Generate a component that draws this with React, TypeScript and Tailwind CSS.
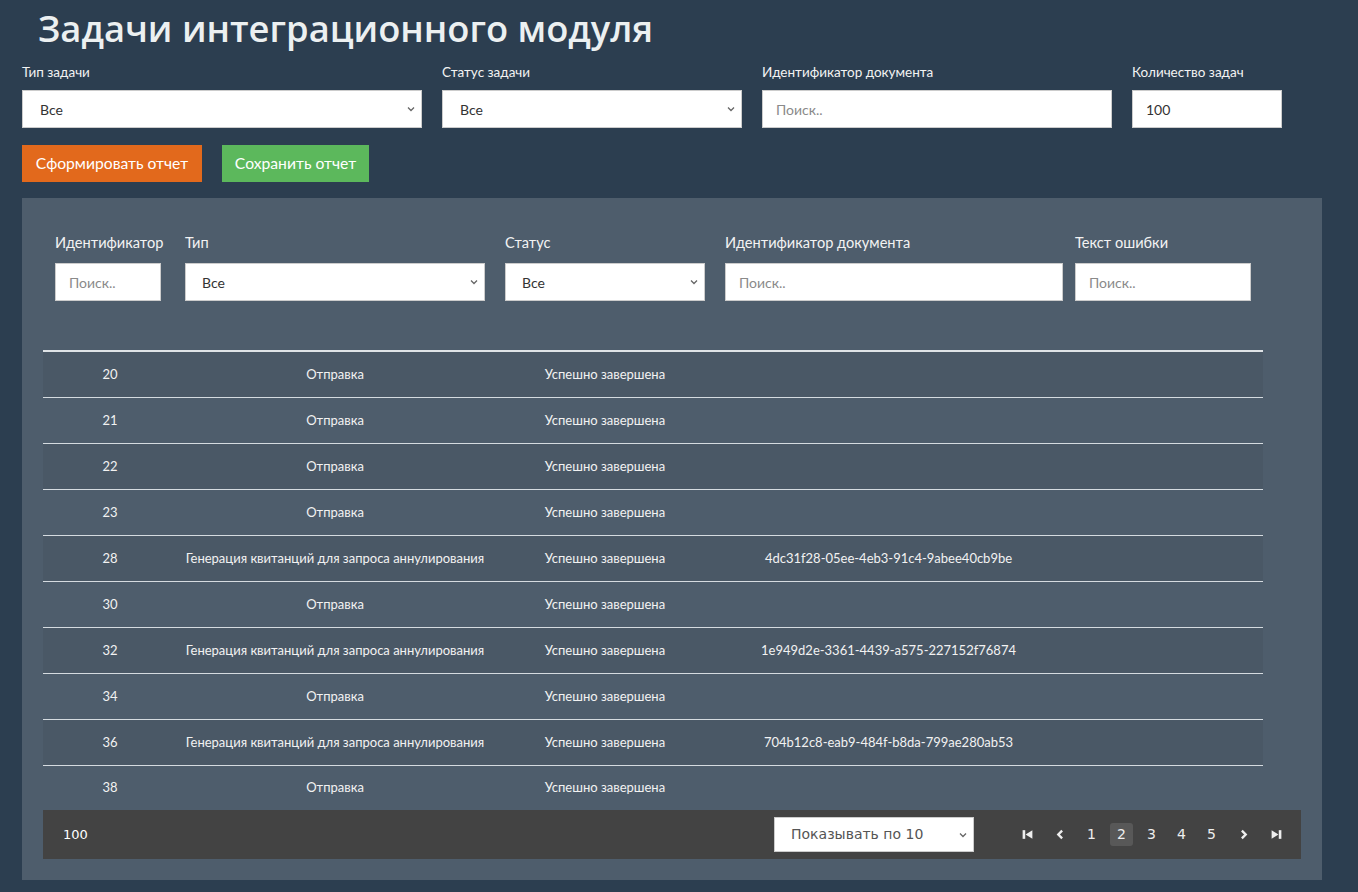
import React from "react";

type Row = { id: number; type: string; status: string; doc: string };

const SEND = "Отправка";
const GEN = "Генерация квитанций для запроса аннулирования";
const OK = "Успешно завершена";

const rows: Row[] = [
  { id: 20, type: SEND, status: OK, doc: "" },
  { id: 21, type: SEND, status: OK, doc: "" },
  { id: 22, type: SEND, status: OK, doc: "" },
  { id: 23, type: SEND, status: OK, doc: "" },
  { id: 28, type: GEN, status: OK, doc: "4dc31f28-05ee-4eb3-91c4-9abee40cb9be" },
  { id: 30, type: SEND, status: OK, doc: "" },
  { id: 32, type: GEN, status: OK, doc: "1e949d2e-3361-4439-a575-227152f76874" },
  { id: 34, type: SEND, status: OK, doc: "" },
  { id: 36, type: GEN, status: OK, doc: "704b12c8-eab9-484f-b8da-799ae280ab53" },
  { id: 38, type: SEND, status: OK, doc: "" },
];

const Chevron = () => (
  <svg width="10" height="10" viewBox="0 0 10 10" className="pointer-events-none absolute right-[6px] top-1/2 -translate-y-1/2">
    <path d="M2 3.5 L5 6.5 L8 3.5" fill="none" stroke="#666" strokeWidth="1.3" />
  </svg>
);

const Select = ({ w, pl, value }: { w: string; pl: string; value: string }) => (
  <div className={`relative h-[38px] ${w}`}>
    <select
      defaultValue={value}
      className={`h-full w-full appearance-none border border-[#ccc] bg-white ${pl} font-['Lato',sans-serif] text-[14px] text-[#333] outline-none`}
    >
      <option>{value}</option>
    </select>
    <Chevron />
  </div>
);

const Input = ({ w, placeholder, value }: { w: string; placeholder?: string; value?: string }) => (
  <input
    defaultValue={value}
    placeholder={placeholder}
    className={`h-[38px] ${w} border border-[#ccc] bg-white px-[13px] font-['Lato',sans-serif] text-[14px] text-[#333] outline-none placeholder:text-[#8a8a8a]`}
  />
);

const Label = ({ children }: { children: React.ReactNode }) => (
  <div className="mb-[10px] whitespace-nowrap font-['Lato',sans-serif] text-[13.5px] leading-[16px] text-[#f3f3f3]">{children}</div>
);

const BigLabel = ({ children }: { children: React.ReactNode }) => (
  <div className="mb-[12px] whitespace-nowrap font-['Lato',sans-serif] text-[14.6px] leading-[17px] text-[#f3f3f3]">{children}</div>
);

const PagerIcon = ({ kind }: { kind: "first" | "prev" | "next" | "last" }) => (
  <svg width="13" height="13" viewBox="0 0 12 12">
    {kind === "first" && (
      <>
        <rect x="1.5" y="2" width="2.4" height="8" fill="#eee" />
        <path d="M10.5 2 L4.2 6 L10.5 10 Z" fill="#eee" />
      </>
    )}
    {kind === "last" && (
      <>
        <rect x="8.1" y="2" width="2.4" height="8" fill="#eee" />
        <path d="M1.5 2 L7.8 6 L1.5 10 Z" fill="#eee" />
      </>
    )}
    {kind === "prev" && <path d="M7.5 2.5 L4 6 L7.5 9.5" fill="none" stroke="#eee" strokeWidth="2.2" />}
    {kind === "next" && <path d="M4.5 2.5 L8 6 L4.5 9.5" fill="none" stroke="#eee" strokeWidth="2.2" />}
  </svg>
);

export default function App() {
  return (
    <div className="min-h-screen bg-[#2c3e50] px-[22px] pb-[12px]">
      <h1 className="pl-4 pt-[6px] font-['Open_Sans',sans-serif] text-[36.3px] font-semibold leading-[44px] text-[#ecf0f1]">
        Задачи интеграционного модуля
      </h1>

      <div className="mt-[14px] flex gap-[20px]">
        <div>
          <Label>Тип задачи</Label>
          <Select w="w-[400px]" pl="pl-[17px]" value="Все" />
        </div>
        <div>
          <Label>Статус задачи</Label>
          <Select w="w-[300px]" pl="pl-[17px]" value="Все" />
        </div>
        <div>
          <Label>Идентификатор документа</Label>
          <Input w="w-[350px]" placeholder="Поиск.." />
        </div>
        <div>
          <Label>Количество задач</Label>
          <Input w="w-[150px]" value="100" />
        </div>
      </div>

      <div className="mt-[17px] flex gap-[20px] font-['Lato',sans-serif] text-[15.7px] text-white">
        <button className="h-[37px] w-[180px] bg-[#e2691c]">Сформировать отчет</button>
        <button className="h-[37px] w-[147px] bg-[#5cb85c]">Сохранить отчет</button>
      </div>

      <div className="mt-[16px] w-[1300px] bg-[#4e5d6c] px-[21px] pb-[21px] pt-[36px]">
        <div className="flex pl-[12px]">
          <div className="w-[110px]">
            <BigLabel>Идентификатор</BigLabel>
            <Input w="w-[106px]" placeholder="Поиск.." />
          </div>
          <div className="ml-[20px]">
            <BigLabel>Тип</BigLabel>
            <Select w="w-[300px]" pl="pl-[16px]" value="Все" />
          </div>
          <div className="ml-[20px]">
            <BigLabel>Статус</BigLabel>
            <Select w="w-[200px]" pl="pl-[16px]" value="Все" />
          </div>
          <div className="ml-[20px]">
            <BigLabel>Идентификатор документа</BigLabel>
            <Input w="w-[338px]" placeholder="Поиск.." />
          </div>
          <div className="ml-[12px]">
            <BigLabel>Текст ошибки</BigLabel>
            <Input w="w-[176px]" placeholder="Поиск.." />
          </div>
        </div>

        <div className="mt-[49px] w-[1220px] border-t-2 border-[#dfe3e6]">
          {rows.map((r, i) => (
            <div
              key={r.id}
              className={`flex items-center text-[#f2f2f2] ${i % 2 === 0 ? "bg-[#4a5866]" : "bg-[#4e5d6c]"} ${
                i < rows.length - 1 ? "h-[46px] border-b border-[#d5dbe0]" : "h-[44px]"
              }`}
            >
              <div className="w-[134px] text-center font-['Lato',sans-serif] text-[13px]">{r.id}</div>
              <div className="w-[316px] text-center font-['Lato',sans-serif] text-[13px]">{r.type}</div>
              <div className="w-[224px] text-center font-['Lato',sans-serif] text-[13px]">{r.status}</div>
              <div className="w-[343px] text-center font-['Lato',sans-serif] text-[13px]">{r.doc}</div>
              <div className="flex-1" />
            </div>
          ))}
        </div>

        <div className="flex h-[49px] items-center bg-[#434343] pl-[20px] pr-[12px] font-['DejaVu_Sans',sans-serif] text-white">
          <div className="text-[13px]">100</div>
          <div className="flex-1" />
          <div className="relative h-[35px] w-[200px]">
            <select className="h-full w-full appearance-none border border-[#ccc] bg-white pl-[16px] font-['DejaVu_Sans',sans-serif] text-[14px] text-[#555] outline-none">
              <option>Показывать по 10</option>
            </select>
            <Chevron />
          </div>
          <div className="ml-[40px] flex items-center gap-[7px] text-[14px] text-[#eee]">
            <span className="flex h-[23px] w-[26px] items-center justify-center"><PagerIcon kind="first" /></span>
            <span className="flex h-[23px] w-[26px] items-center justify-center"><PagerIcon kind="prev" /></span>
            {[1, 2, 3, 4, 5].map((p) => (
              <span
                key={p}
                className={`flex h-[23px] w-[23px] items-center justify-center rounded-[3px] ${p === 2 ? "bg-[#585858]" : ""}`}
              >
                {p}
              </span>
            ))}
            <span className="flex h-[23px] w-[26px] items-center justify-center"><PagerIcon kind="next" /></span>
            <span className="flex h-[23px] w-[26px] items-center justify-center"><PagerIcon kind="last" /></span>
          </div>
        </div>
      </div>
    </div>
  );
}
